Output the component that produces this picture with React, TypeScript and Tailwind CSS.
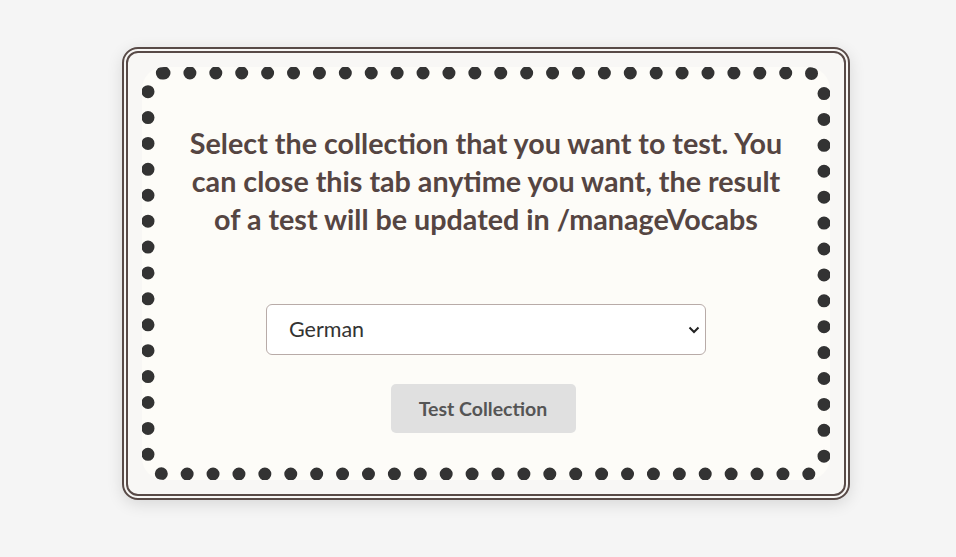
import React from "react";

export default function App() {
  return (
    <div
      className="min-h-[557px] w-full bg-[#f5f5f5] pt-[47px] pl-[122px]"
      style={{ fontFamily: "Lato, 'Open Sans', sans-serif" }}
    >
      <div className="w-[728px] h-[453px] rounded-[16px] border-[6px] border-double border-[#584a47] bg-[#f8f7f5] p-[14px] shadow-[0_4px_16px_rgba(0,0,0,0.12)]">
        <div className="h-full w-full rounded-[22px] border-[13px] border-dotted border-[#333333] bg-[#fdfcf8] flex flex-col items-center">
          <h2 className="mt-[44px] w-[610px] text-center text-[28.7px] leading-[38px] font-bold text-[#554542]">
            Select the collection that you want to test. You can close this tab anytime you want, the result of a test will be updated in /manageVocabs
          </h2>
          <div className="mt-[66px] relative w-[440px] h-[51px]">
            <select
              className="appearance-none w-full h-full rounded-[6px] border border-[#b8aba8] bg-white pl-[22px] text-[21.5px] text-[#333333] outline-none"
              style={{ fontFamily: "Lato, sans-serif" }}
              defaultValue="German"
            >
              <option>German</option>
            </select>
            <svg
              className="absolute right-[6px] top-[21px] pointer-events-none"
              width="12"
              height="10"
              viewBox="0 0 12 10"
            >
              <path d="M1.5 2.5 L6 7 L10.5 2.5" stroke="#222" strokeWidth="2" fill="none" />
            </svg>
          </div>
          <button className="mt-[29px] mr-[6px] w-[185px] h-[49px] rounded-[5px] bg-[#e0e0e0] text-[19.5px] font-bold text-[#555555]">
            Test Collection
          </button>
        </div>
      </div>
    </div>
  );
}
